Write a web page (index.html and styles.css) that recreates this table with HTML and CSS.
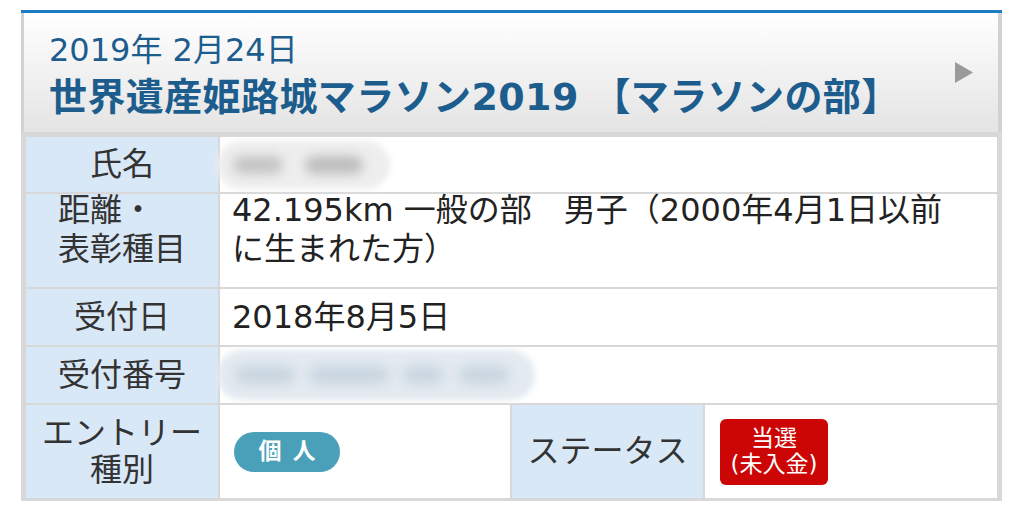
FILE: index.html
```html
<!DOCTYPE html>
<html lang="ja">
<head>
<meta charset="utf-8">
<title>エントリー詳細</title>
<link rel="stylesheet" href="styles.css">
</head>
<body>
<div class="card">
  <div class="head">
    <div class="head-text">
      <div class="date">2019年 2月24日</div>
      <div class="title">世界遺産姫路城マラソン2019 【マラソンの部】</div>
    </div>
    <svg class="arrow" width="18" height="21" viewBox="0 0 18 21"><path d="M0 0 L18 10.5 L0 21 Z" fill="#9a9a9a"/></svg>
  </div>
  <div class="grid">
    <div class="lbl">氏名</div>
    <div class="val span3">
      <div class="blob name"><span class="sm s1"></span><span class="sm s2"></span></div>
    </div>

    <div class="lbl top"><span class="lbl-block">距離・<br>表彰種目</span></div>
    <div class="val span3 top"><div class="lines">42.195km 一般の部　男子（2000年4月1日以前<br>に生まれた方）</div></div>

    <div class="lbl">受付日</div>
    <div class="val span3">2018年8月5日</div>

    <div class="lbl">受付番号</div>
    <div class="val span3">
      <div class="blob num"><span class="sm n1"></span><span class="sm n2"></span><span class="sm n3"></span><span class="sm n4"></span></div>
    </div>

    <div class="lbl two">エントリー<br>種別</div>
    <div class="val"><span class="pill">個人</span></div>
    <div class="lbl">ステータス</div>
    <div class="val"><span class="status">当選<br>(未入金)</span></div>
  </div>
</div>
</body>
</html>
```
FILE: styles.css
```css
html, body {
  margin: 0;
  background: #fff;
}
body {
  font-family: "DejaVu Sans", "Noto Sans CJK JP", sans-serif;
}
.card {
  margin: 10px 0 0 21px;
  width: 981px;
  border-top: 3px solid #1c7dc2;
}
.head {
  box-sizing: border-box;
  height: 119px;
  border-left: 3px solid #d2d2d2;
  border-right: 4px solid #d2d2d2;
  background: linear-gradient(#ffffff, #e4e4e4);
  display: flex;
  justify-content: space-between;
  align-items: flex-start;
  padding: 17px 25px 0 25px;
  color: #1d5d8e;
}
.date {
  font-size: 32px;
  line-height: 40px;
}
.title {
  margin-top: 4px;
  font-size: 38px;
  line-height: 46px;
  font-weight: bold;
  letter-spacing: 0.4px;
  white-space: nowrap;
}
.arrow {
  align-self: center;
  margin-top: -17px;
  flex: none;
}
.grid {
  display: grid;
  grid-template-columns: 192px 290px 191px 1fr;
  grid-template-rows: 55px 93px 56px 56px 93px;
  gap: 2px;
  background: #d8d8d8;
  padding: 5px 5px 3px 5px;
}
.lbl {
  background: #d9e8f7;
  color: #333;
  font-size: 32px;
  line-height: 37px;
  display: flex;
  align-items: center;
  justify-content: center;
  text-align: center;
}
.lbl.top {
  align-items: flex-start;
  line-height: 39px;
}
.lbl-block {
  display: inline-block;
  text-align: left;
  margin-top: -3px;
}
.val {
  background: #fff;
  color: #222;
  font-size: 32px;
  line-height: 39px;
  display: flex;
  align-items: center;
  padding-left: 12px;
}
.val.top {
  align-items: flex-start;
}
.lines {
  margin-top: -3px;
}
.span3 {
  grid-column: 2 / 5;
}
.blob {
  margin-left: -15px;
  border-radius: 25px;
  filter: blur(3px);
  display: flex;
  align-items: center;
}
.sm {
  display: block;
  height: 18px;
  border-radius: 9px;
  filter: blur(4px);
}
.name {
  width: 173px;
  height: 48px;
  background: #eeeeee;
}
.name .s1 { width: 50px; margin-left: 16px; background: #c4c4c4; }
.name .s2 { width: 58px; margin-left: 22px; background: #bdbdbd; }
.num {
  width: 318px;
  height: 50px;
  background: #e3eaf0;
}
.num .sm { background: #c9d6e0; }
.num .n1 { width: 60px; margin-left: 18px; }
.num .n2 { width: 80px; margin-left: 14px; }
.num .n3 { width: 40px; margin-left: 14px; }
.num .n4 { width: 50px; margin-left: 16px; }
.pill {
  margin-left: 2px;
  width: 106px;
  height: 40px;
  border-radius: 20px;
  background: #4aa0b9;
  color: #fff;
  font-size: 23px;
  font-weight: bold;
  display: flex;
  align-items: center;
  justify-content: center;
  letter-spacing: 11px;
  text-indent: 11px;
}
.status {
  margin-left: 3px;
  width: 108px;
  height: 66px;
  box-sizing: border-box;
  padding-top: 6px;
  border-radius: 6px;
  background: #cc0505;
  color: #fff;
  font-size: 23px;
  line-height: 26px;
  text-align: center;
}
```
